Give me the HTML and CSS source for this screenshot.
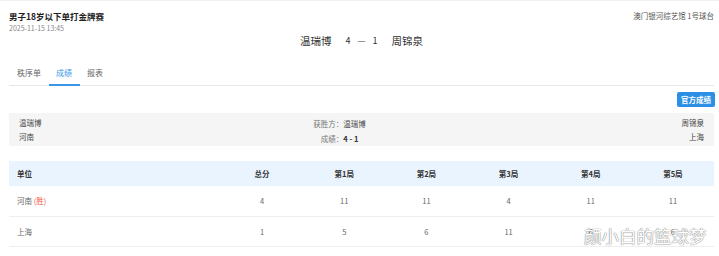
FILE: index.html
```html
<!DOCTYPE html>
<html lang="zh">
<head>
<meta charset="utf-8">
<link rel="stylesheet" href="styles.css">
</head>
<body>
<div class="page">
  <div class="header">
    <div class="head-left">
      <div class="title">男子18岁以下单打金牌赛</div>
      <div class="date">2025-11-15 13:45</div>
    </div>
    <div class="venue">澳门银河综艺馆 1号球台</div>
  </div>
  <div class="scoreline">
    <span class="player">温瑞博</span>
    <span class="num">4</span>
    <span class="dash">—</span>
    <span class="num">1</span>
    <span class="player">周锦泉</span>
  </div>
  <div class="tabs">
    <div class="tab">秩序单</div>
    <div class="tab active">成绩</div>
    <div class="tab">报表</div>
  </div>
  <div class="toolbar">
    <button class="btn">官方成绩</button>
  </div>
  <div class="info">
    <div class="side">
      <div>温瑞博</div>
      <div>河南</div>
    </div>
    <div class="mid">
      <span class="lbl">获胜方：</span><span class="val">温瑞博</span>
      <span class="lbl">成绩：</span><span class="val strong">4 - 1</span>
    </div>
    <div class="side right">
      <div>周锦泉</div>
      <div>上海</div>
    </div>
  </div>
  <table class="grid">
    <colgroup>
      <col class="c-unit">
      <col><col><col><col><col><col>
    </colgroup>
    <thead>
      <tr><th class="unit">单位</th><th>总分</th><th>第1局</th><th>第2局</th><th>第3局</th><th>第4局</th><th>第5局</th></tr>
    </thead>
    <tbody>
      <tr><td class="unit">河南 <span class="win">(胜)</span></td><td>4</td><td>11</td><td>11</td><td>4</td><td>11</td><td>11</td></tr>
      <tr><td class="unit">上海</td><td>1</td><td>5</td><td>6</td><td>11</td><td>6</td><td>6</td></tr>
    </tbody>
  </table>
  <div class="watermark">颜小白的篮球梦</div>
</div>
</body>
</html>
```

FILE: styles.css
```css
* { box-sizing: border-box; }
html, body { margin: 0; padding: 0; background: #fff; }
body {
  font-family: "Noto Sans CJK SC", "Liberation Sans", sans-serif;
  color: #333;
  width: 719px;
  height: 256px;
  overflow: hidden;
}
.page {
  position: relative;
  border-top: 1px solid #f0f0f0;
  padding: 0 5px 0 9px;
  height: 256px;
}
.header {
  display: flex;
  justify-content: space-between;
  align-items: flex-start;
  padding-top: 9px;
}
.title {
  font-size: 8.5px;
  font-weight: 700;
  line-height: 12px;
  color: #222;
}
.date {
  font-size: 7px;
  line-height: 10px;
  margin-top: 1px;
  color: #888;
}
.venue {
  font-size: 7.5px;
  line-height: 12px;
  color: #555;
}
.scoreline {
  display: flex;
  justify-content: center;
  align-items: center;
  height: 14px;
  margin-top: 1px;
  font-size: 10.5px;
  line-height: 14px;
  color: #333;
}
.scoreline .player { margin: 0 10px; }
.scoreline .num { margin: 0 4px; font-size: 9px; }
.scoreline .dash { margin: 0 3px; font-size: 9px; color: #555; }
.tabs {
  display: flex;
  margin-top: 13px;
  border-bottom: 1px solid #e8e8e8;
  height: 25px;
}
.tab {
  padding: 0 7.5px;
  font-size: 8px;
  line-height: 24px;
  color: #666;
}
.tab:first-child { padding-left: 8px; }
.tab.active {
  color: #3a96e6;
  border-bottom: 2px solid #3a96e6;
  margin-bottom: -1px;
}
.toolbar {
  display: flex;
  justify-content: flex-end;
  margin-top: 6px;
  margin-right: -1px;
}
.btn {
  border: none;
  background: #2c8fe6;
  color: #fff;
  font-family: inherit;
  font-size: 7.5px;
  font-weight: 700;
  height: 15px;
  line-height: 15px;
  padding: 0 4px;
  border-radius: 2px;
}
.info {
  display: grid;
  grid-template-columns: 1fr 1fr 1fr;
  margin-top: 6px;
  background: #f5f5f5;
  height: 33px;
  padding: 3px 10px 0 10px;
  font-size: 7.5px;
  color: #444;
}
.side div { line-height: 13.5px; }
.side.right { text-align: right; }
.mid {
  display: grid;
  grid-template-columns: 96px auto;
  grid-auto-rows: 15px;
  align-items: center;
}
.mid .lbl { text-align: right; color: #777; }
.mid .val { padding-left: 0; color: #444; }
.mid .val.strong { font-weight: 700; color: #333; }
.grid {
  margin-top: 15px;
  width: 705px;
  border-collapse: collapse;
  table-layout: fixed;
  font-size: 7.5px;
}
.grid col.c-unit { width: 212px; }
.grid th {
  background: #e9f4fe;
  height: 25px;
  font-weight: 700;
  color: #333;
  text-align: center;
  padding: 0;
}
.grid td {
  height: 30px;
  text-align: center;
  color: #666;
  border-bottom: 1px solid #eeeeee;
  padding: 0;
}
.grid .unit { text-align: left; padding-left: 8px; }
.win { color: #f05a4a; }
.watermark {
  position: absolute;
  left: 584px;
  top: 225px;
  font-size: 17.5px;
  line-height: 20px;
  color: #fff;
  text-shadow: 0 0 1px #777, 0 0 1px #888;
}
```
